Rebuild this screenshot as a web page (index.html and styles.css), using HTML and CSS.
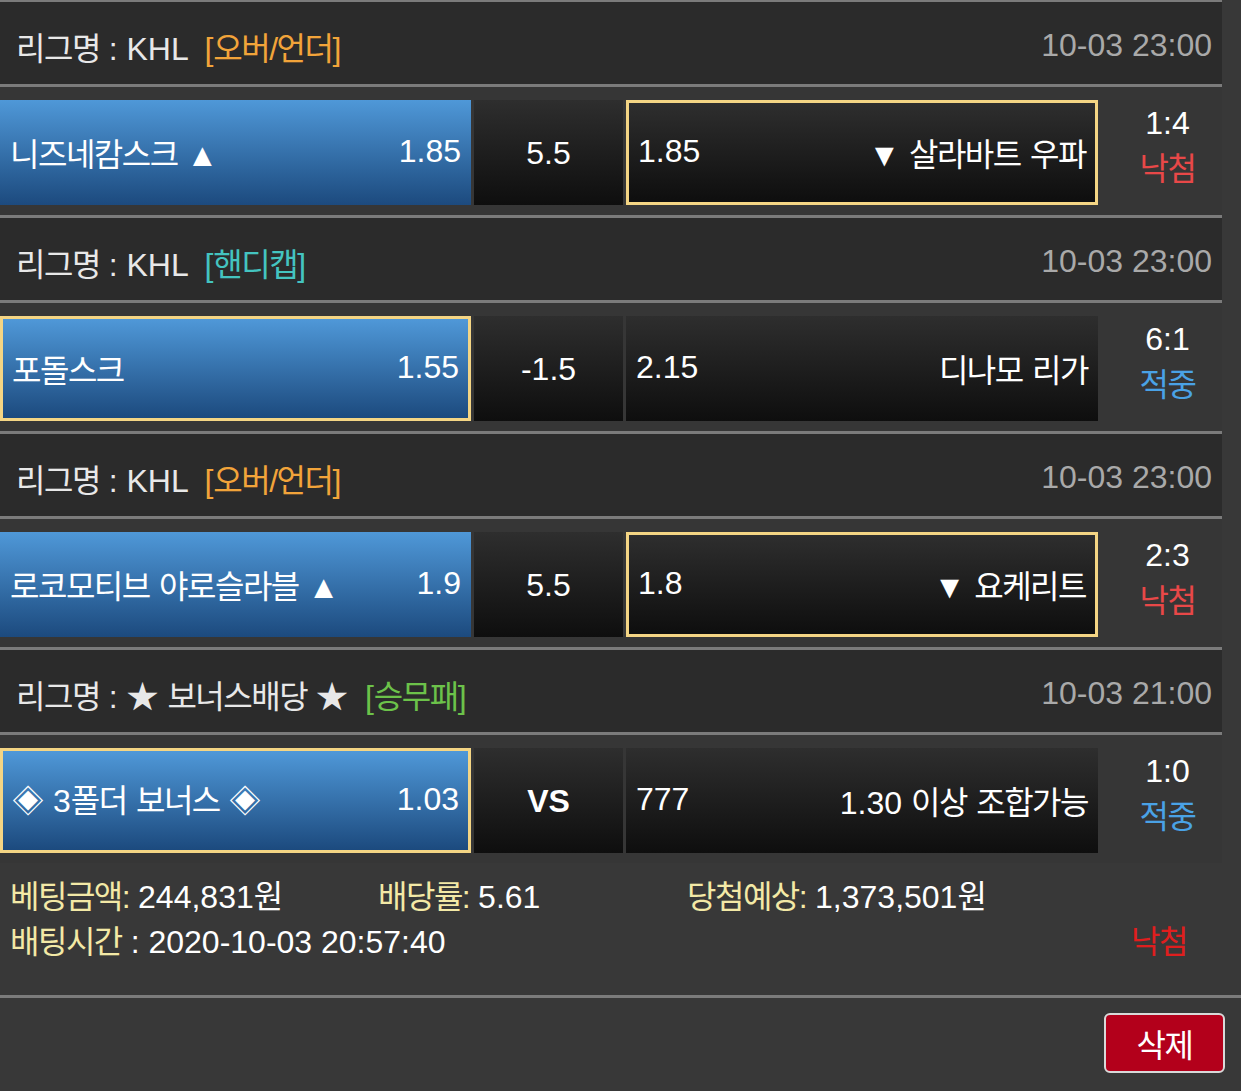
FILE: index.html
```html
<!DOCTYPE html>
<html lang="ko">
<head>
<meta charset="utf-8">
<title>베팅내역</title>
<link rel="stylesheet" href="styles.css">
</head>
<body>
<div class="board">
  <section class="match">
    <div class="league">
      <span class="lname"><span class="ko">리그명</span> : KHL <span class="tag over">[<span class="ko">오버/언더</span>]</span></span>
      <span class="time">10-03 23:00</span>
    </div>
    <div class="game">
      <div class="cell home"><span><span class="ko">니즈네캄스크</span> ▲</span><span class="odd">1.85</span></div>
      <div class="cell mid">5.5</div>
      <div class="cell away sel"><span class="odd">1.85</span><span>▼ <span class="ko">살라바트 우파</span></span></div>
      <div class="score"><span>1:4</span><span class="ko lose">낙첨</span></div>
    </div>
  </section>
  <section class="match">
    <div class="league">
      <span class="lname"><span class="ko">리그명</span> : KHL <span class="tag handi">[<span class="ko">핸디캡</span>]</span></span>
      <span class="time">10-03 23:00</span>
    </div>
    <div class="game">
      <div class="cell home sel"><span class="ko">포돌스크</span><span class="odd">1.55</span></div>
      <div class="cell mid">-1.5</div>
      <div class="cell away"><span class="odd">2.15</span><span class="ko">디나모 리가</span></div>
      <div class="score"><span>6:1</span><span class="ko win">적중</span></div>
    </div>
  </section>
  <section class="match">
    <div class="league">
      <span class="lname"><span class="ko">리그명</span> : KHL <span class="tag over">[<span class="ko">오버/언더</span>]</span></span>
      <span class="time">10-03 23:00</span>
    </div>
    <div class="game">
      <div class="cell home"><span><span class="ko">로코모티브 야로슬라블</span> ▲</span><span class="odd">1.9</span></div>
      <div class="cell mid">5.5</div>
      <div class="cell away sel"><span class="odd">1.8</span><span>▼ <span class="ko">요케리트</span></span></div>
      <div class="score"><span>2:3</span><span class="ko lose">낙첨</span></div>
    </div>
  </section>
  <section class="match">
    <div class="league">
      <span class="lname"><span class="ko">리그명</span> : ★ <span class="ko">보너스배당</span> ★ <span class="tag wdl">[<span class="ko">승무패</span>]</span></span>
      <span class="time">10-03 21:00</span>
    </div>
    <div class="game">
      <div class="cell home sel"><span>◈ 3<span class="ko">폴더 보너스</span> ◈</span><span class="odd">1.03</span></div>
      <div class="cell mid vs">VS</div>
      <div class="cell away"><span class="odd">777</span><span>1.30 <span class="ko">이상 조합가능</span></span></div>
      <div class="score"><span>1:0</span><span class="ko win">적중</span></div>
    </div>
  </section>
</div>
<div class="info">
  <div class="info-row">
    <span class="amt"><span class="lbl ko">베팅금액:</span> 244,831<span class="ko">원</span></span>
    <span class="rate"><span class="lbl ko">배당률:</span> 5.61</span>
    <span class="exp"><span class="lbl ko">당첨예상:</span> 1,373,501<span class="ko">원</span></span>
  </div>
  <div class="info-row split">
    <span><span class="lbl ko">배팅시간</span> : 2020-10-03 20:57:40</span>
    <span class="ko result">낙첨</span>
  </div>
</div>
<div class="footer">
  <button class="del ko" type="button">삭제</button>
</div>
</body>
</html>
```

FILE: styles.css
```css
html, body {
  margin: 0;
  padding: 0;
}
body {
  background: #383838;
  color: #ffffff;
  font-family: "Liberation Sans", Arial, "Noto Sans CJK KR", sans-serif;
  font-size: 32px;
  overflow: hidden;
}
.ko {
  letter-spacing: -1.5px;
  word-spacing: 2px;
}
.board {
  width: 1222px;
  margin-top: -1px;
}
.league {
  height: 82px;
  box-sizing: content-box;
  border-top: 3px solid #7b7b7b;
  border-bottom: 3px solid #7b7b7b;
  background: #2b2b2b;
  display: flex;
  align-items: center;
  justify-content: space-between;
  padding: 0 10px 0 16px;
  color: #e8e8e8;
  white-space: nowrap;
}
.lname, .time {
  padding-top: 5px;
}
.tag {
  margin-left: 8px;
}
.over { color: #f2a43a; }
.handi { color: #44c4c0; }
.wdl { color: #6cc24a; }
.time {
  color: #a9a9a9;
}
.game {
  display: grid;
  grid-template-columns: 471px 149px 472px 1fr;
  column-gap: 3px;
  padding: 13px 0 10px;
  background: #363636;
}
.cell {
  height: 105px;
  box-sizing: border-box;
  display: flex;
  align-items: center;
  justify-content: space-between;
  padding: 0 10px 2px;
  white-space: nowrap;
}
.home {
  background: linear-gradient(#4f98d8, #1c4a7e);
}
.mid, .away {
  background: linear-gradient(#2e2e2e, #0e0e0e);
}
.mid {
  justify-content: center;
  padding-top: 4px;
}
.vs {
  font-weight: bold;
}
.sel {
  border: 3px solid #f4d584;
  padding: 0 9px 2px 9px;
}
.score {
  display: flex;
  flex-direction: column;
  align-items: center;
  align-self: start;
  line-height: 46px;
  padding-left: 12px;
}
.lose { color: #e84848; }
.win { color: #4aa2e6; }
.info {
  padding: 12px 54px 30px 10px;
  line-height: 45px;
  white-space: nowrap;
}
.info-row {
  display: flex;
}
.amt { width: 368px; }
.rate { width: 309px; }
.split {
  justify-content: space-between;
}
.lbl {
  color: #f3e9a6;
}
.result {
  color: #e01e1e;
}
.footer {
  border-top: 3px solid #7b7b7b;
  padding: 15px 16px 18px;
  display: flex;
  justify-content: flex-end;
}
.del {
  width: 121px;
  height: 60px;
  background: #b3001b;
  border: 2px solid #d9d9d9;
  border-radius: 6px;
  color: #ffffff;
  font-family: inherit;
  font-size: 32px;
  padding: 0;
}
```
